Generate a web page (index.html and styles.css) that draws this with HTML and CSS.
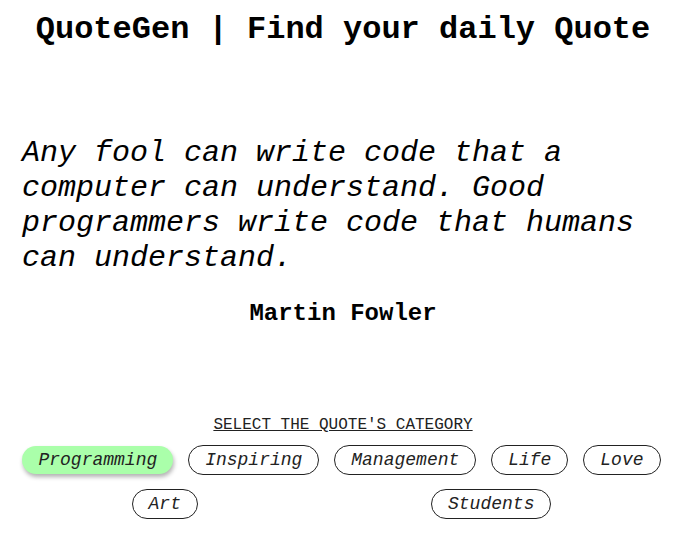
FILE: index.html
```html
<!DOCTYPE html>
<html lang="en">
<head>
<meta charset="utf-8">
<title>QuoteGen</title>
<link rel="stylesheet" href="styles.css">
</head>
<body>
<div class="app">
  <h1 class="title">QuoteGen | Find your daily Quote</h1>
  <p class="quote">Any fool can write code that a computer can understand. Good programmers write code that humans can understand.</p>
  <p class="author">Martin Fowler</p>
  <p class="label">SELECT THE QUOTE'S CATEGORY</p>
  <div class="cats">
    <button class="cat cat-active">Programming</button>
    <button class="cat">Inspiring</button>
    <button class="cat">Management</button>
    <button class="cat">Life</button>
    <button class="cat">Love</button>
    <button class="cat">Art</button>
    <button class="cat">Students</button>
  </div>
</div>
</body>
</html>
```
FILE: styles.css
```css
body {
  margin: 8px;
  background: #fff;
  color: #000;
  font-family: "Liberation Mono", "Courier New", monospace;
}
.app {
  padding: 0 7px;
}
.title {
  margin: 4px 0 0;
  font-size: 32px;
  line-height: 36px;
  font-weight: bold;
  text-align: center;
}
.quote {
  margin: 88px 0 0;
  padding: 0 7px;
  font-size: 30px;
  line-height: 35px;
  font-style: italic;
}
.author {
  margin: 24px 0 0;
  font-size: 24px;
  line-height: 27px;
  font-weight: bold;
  text-align: center;
}
.label {
  margin: 89px 0 0;
  font-size: 16px;
  line-height: 18px;
  text-align: center;
  text-decoration: underline;
  color: #222;
}
.cats {
  margin-top: 4px;
  padding-right: 3px;
  display: flex;
  flex-wrap: wrap;
  justify-content: space-around;
  align-items: center;
}
.cat {
  margin: 7px;
  padding: 4px 16px;
  font-family: "Liberation Mono", "Courier New", monospace;
  font-size: 18px;
  line-height: 20px;
  font-style: italic;
  color: #222;
  background: #fff;
  border: 1px solid #222;
  border-radius: 16px;
}
.cat-active {
  background: #aaffaa;
  border: none;
  box-shadow: 1px 3px 4px rgba(0, 0, 0, 0.3);
}
```
